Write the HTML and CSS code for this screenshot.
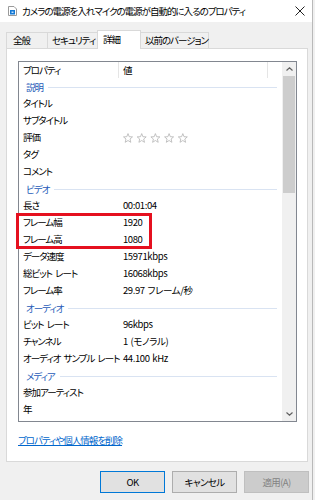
FILE: index.html
```html
<!DOCTYPE html>
<html lang="ja">
  <head>
    <meta charset="utf-8">
    <title>プロパティ</title>
    <link rel="stylesheet" href="styles.css">
  </head>
  <body>
    <div class="window">
      <div class="titlebar">
        <svg class="title-icon" width="9" height="10" viewBox="0 0 9 10">
          <path d="M0.5 0.5 H6 L8.5 3 V9.5 H0.5 Z" fill="#fff" stroke="#9a9a9a"/>
          <rect x="2" y="4" width="5" height="4.5" fill="#1479d4"/>
          <rect x="3.5" y="5.5" width="2" height="1.5" fill="#bfe0ff"/>
        </svg>
        <span class="title-text">カメラの電源を入れマイクの電源が自動的に入るのプロパティ</span>
        <svg class="close-btn" width="10" height="10" viewBox="0 0 10 10">
          <path d="M0.5 0.5 L9.5 9.5 M9.5 0.5 L0.5 9.5" stroke="#222" stroke-width="1"/>
        </svg>
      </div>

      <div class="tabs">
        <div class="tab tab-general">全般</div>
        <div class="tab tab-security">セキュリティ</div>
        <div class="tab tab-details active">詳細</div>
        <div class="tab tab-versions">以前のバージョン</div>
      </div>

      <div class="panel">
        <div class="list-wrap">
          <div class="list">
            <div class="list-body">
              <div class="list-head">
                <span class="head-cell">プロパティ</span>
                <span class="head-cell">値</span>
                <span class="head-cell"></span>
              </div>
              <div class="group"><span>説明</span></div>
              <div class="row"><span>タイトル</span><span></span></div>
              <div class="row"><span>サブタイトル</span><span></span></div>
              <div class="row">
                <span>評価</span>
                <span class="stars">
                  <svg width="68" height="10" viewBox="0 0 68 10">
                    <g fill="none" stroke="#b4b4b4" stroke-width="0.8">
                      <path id="star" d="M5 0.6 L6.2 3.7 L9.5 3.9 L7 6 L7.8 9.3 L5 7.5 L2.2 9.3 L3 6 L0.5 3.9 L3.8 3.7 Z"/>
                      <use href="#star" x="13.7"/>
                      <use href="#star" x="27.4"/>
                      <use href="#star" x="41.1"/>
                      <use href="#star" x="54.8"/>
                    </g>
                  </svg>
                </span>
              </div>
              <div class="row"><span>タグ</span><span></span></div>
              <div class="row"><span>コメント</span><span></span></div>
              <div class="group"><span>ビデオ</span></div>
              <div class="row"><span>長さ</span><span>00:01:04</span></div>
              <div class="row"><span>フレーム幅</span><span>1920</span></div>
              <div class="row"><span>フレーム高</span><span>1080</span></div>
              <div class="row"><span>データ速度</span><span>15971kbps</span></div>
              <div class="row"><span>総ビット レート</span><span>16068kbps</span></div>
              <div class="row"><span>フレーム率</span><span>29.97 フレーム/秒</span></div>
              <div class="group"><span>オーディオ</span></div>
              <div class="row"><span>ビット レート</span><span>96kbps</span></div>
              <div class="row"><span>チャンネル</span><span>1 (モノラル)</span></div>
              <div class="row"><span>オーディオ サンプル レート</span><span>44.100 kHz</span></div>
              <div class="group"><span>メディア</span></div>
              <div class="row"><span>参加アーティスト</span><span></span></div>
              <div class="row"><span>年</span><span></span></div>
            </div>
            <div class="scrollbar">
              <div class="sb-btn">
                <svg width="7" height="4" viewBox="0 0 7 4">
                  <path d="M0.5 3.5 L3.5 0.8 L6.5 3.5" fill="none" stroke="#606060" stroke-width="1.2"/>
                </svg>
              </div>
              <div class="sb-thumb"></div>
              <div class="sb-track"></div>
              <div class="sb-btn">
                <svg width="7" height="4" viewBox="0 0 7 4">
                  <path d="M0.5 0.5 L3.5 3.2 L6.5 0.5" fill="none" stroke="#606060" stroke-width="1.2"/>
                </svg>
              </div>
            </div>
          </div>
          <div class="highlight"></div>
        </div>
        <a class="remove-link" href="#">プロパティや個人情報を削除</a>
      </div>

      <div class="buttons">
        <button type="button" class="btn btn-default">OK</button>
        <button type="button" class="btn">キャンセル</button>
        <button type="button" class="btn" disabled>適用(A)</button>
      </div>
    </div>
  </body>
</html>
```

FILE: styles.css
```css
body {
  margin: 0;
  width: 315px;
  height: 500px;
  overflow: hidden;
  font-family: "Noto Sans CJK JP", "Noto Sans", sans-serif;
  font-size: 9.5px;
  letter-spacing: -1px;
  word-spacing: 2px;
  font-feature-settings: "palt";
  color: #000;
  background-color: #f0f0f0;
}
.window {
  width: 312px;
  height: 500px;
  border-right: 1px solid #b9b9b9;
  background-color: #f0f0f0;
}
.titlebar {
  display: flex;
  align-items: center;
  height: 22px;
  background-color: #fff;
}
.title-icon {
  margin-left: 8px;
  flex: none;
}
.title-text {
  margin-left: 5px;
  flex: 1;
  white-space: nowrap;
  line-height: 22px;
}
.close-btn {
  margin-right: 7px;
  flex: none;
}
.tabs {
  display: flex;
  align-items: flex-end;
  height: 18px;
  margin-top: 8px;
  padding-left: 6px;
}
.tab {
  height: 16px;
  box-sizing: border-box;
  padding-left: 6px;
  line-height: 15px;
  border: 1px solid #d9d9d9;
  border-bottom: none;
  border-left: none;
  white-space: nowrap;
}
.tab-general {
  width: 42px;
  border-left: 1px solid #d9d9d9;
}
.tab-security {
  width: 50px;
  padding-left: 4px;
}
.tab-details {
  width: 43px;
  padding-left: 5px;
}
.tab-versions {
  width: 68px;
  padding-left: 4px;
}
.tab.active {
  height: 19px;
  margin-bottom: -1px;
  line-height: 17px;
  background-color: #fff;
  border-left: 1px solid #d9d9d9;
  margin-left: -1px;
  width: 44px;
  position: relative;
  z-index: 1;
}
.panel {
  width: 302px;
  height: 414px;
  box-sizing: border-box;
  margin-left: 6px;
  padding: 12px 11px 0;
  border: 1px solid #d9d9d9;
  background-color: #fff;
}
.list-wrap {
  position: relative;
}
.list {
  display: flex;
  width: 279px;
  height: 361px;
  box-sizing: border-box;
  border: 1px solid #828790;
  overflow: hidden;
}
.list-body {
  flex: 1;
  overflow: hidden;
}
.list-head {
  display: grid;
  grid-template-columns: 100px 149px 1fr;
  height: 16px;
  line-height: 16px;
}
.head-cell {
  padding-left: 4px;
  border-right: 1px solid #e5e5e5;
}
.head-cell:last-child {
  border-right: none;
}
.group {
  display: flex;
  align-items: center;
  height: 17px;
  padding-left: 7px;
  padding-right: 5px;
  color: #1e5bb8;
}
.group::after {
  content: "";
  flex: 1;
  height: 1px;
  margin-left: 5px;
  margin-top: 1px;
  background-color: #d9e3f2;
}
.row {
  display: grid;
  grid-template-columns: 100px 1fr;
  height: 17px;
  line-height: 17px;
  white-space: nowrap;
}
.row span {
  padding-left: 4px;
}
.row span + span {
  letter-spacing: -0.4px;
  word-spacing: 1px;
}
.stars {
  display: flex;
  align-items: center;
}
.scrollbar {
  display: flex;
  flex-direction: column;
  width: 14px;
  flex: none;
  background-color: #f0f0f0;
}
.sb-btn {
  display: flex;
  align-items: center;
  justify-content: center;
  height: 14px;
  flex: none;
}
.sb-thumb {
  height: 117px;
  margin: 0 1px;
  background-color: #cdcdcd;
}
.sb-track {
  flex: 1;
}
.highlight {
  position: absolute;
  left: -2px;
  top: 152px;
  width: 136px;
  height: 36px;
  box-sizing: border-box;
  border: 3px solid #e5101f;
}
.remove-link {
  display: inline-block;
  margin-top: 11px;
  line-height: 14px;
  color: #0066cc;
  text-decoration: underline;
}
.buttons {
  display: flex;
  justify-content: flex-end;
  gap: 7px;
  margin-top: 9px;
  padding-right: 3px;
}
.btn {
  width: 65px;
  height: 22px;
  padding: 0;
  font-family: inherit;
  font-size: 9.5px;
  letter-spacing: -0.6px;
  font-feature-settings: "palt";
  color: #000;
  background-color: #e1e1e1;
  border: 1px solid #adadad;
  border-radius: 0;
}
.btn-default {
  border-color: #0078d7;
}
.btn:disabled {
  color: #838383;
  background-color: #cccccc;
  border-color: #bfbfbf;
}
```
